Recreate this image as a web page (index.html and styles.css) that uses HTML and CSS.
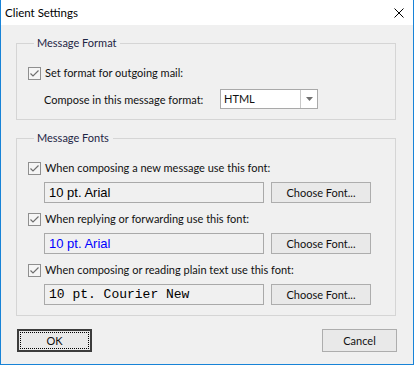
FILE: index.html
```html
<!DOCTYPE html>
<html lang="en">
<head>
  <meta charset="UTF-8">
  <title>Client Settings</title>
  <link rel="stylesheet" href="styles.css">
</head>
<body>
  <div class="window">
    <div class="titlebar">
      <span class="title">Client Settings</span>
      <svg class="close" width="10" height="10" viewBox="0 0 10 10">
        <path d="M0.5 0.5 L9.5 9.5 M9.5 0.5 L0.5 9.5" stroke="#000" stroke-width="1" fill="none"/>
      </svg>
    </div>
    <div class="client">
      <fieldset class="group group-format">
        <legend>Message Format</legend>
        <div class="check-row">
          <svg class="check" width="13" height="13" viewBox="0 0 13 13">
            <rect x="0.5" y="0.5" width="12" height="12" fill="#f5f5f5" stroke="#8f8f8f"/>
            <path d="M2.5 6.5 L5 9 L10.5 3.5" stroke="#6f6f6f" stroke-width="1.2" fill="none"/>
          </svg>
          <span>Set format for outgoing mail:</span>
        </div>
        <div class="format-row">
          <span class="format-label">Compose in this message format:</span>
          <div class="select">
            <span class="select-value">HTML</span>
            <span class="select-arrow">
              <svg width="7" height="4" viewBox="0 0 7 4"><path d="M0 0 H7 L3.5 4 Z" fill="#707070"/></svg>
            </span>
          </div>
        </div>
      </fieldset>

      <fieldset class="group group-fonts">
        <legend>Message Fonts</legend>
        <div class="check-row">
          <svg class="check" width="13" height="13" viewBox="0 0 13 13">
            <rect x="0.5" y="0.5" width="12" height="12" fill="#f5f5f5" stroke="#8f8f8f"/>
            <path d="M2.5 6.5 L5 9 L10.5 3.5" stroke="#6f6f6f" stroke-width="1.2" fill="none"/>
          </svg>
          <span>When composing a new message use this font:</span>
        </div>
        <div class="font-row">
          <div class="font-box font-arial">10 pt. Arial</div>
          <button class="btn">Choose Font...</button>
        </div>
        <div class="check-row">
          <svg class="check" width="13" height="13" viewBox="0 0 13 13">
            <rect x="0.5" y="0.5" width="12" height="12" fill="#f5f5f5" stroke="#8f8f8f"/>
            <path d="M2.5 6.5 L5 9 L10.5 3.5" stroke="#6f6f6f" stroke-width="1.2" fill="none"/>
          </svg>
          <span>When replying or forwarding use this font:</span>
        </div>
        <div class="font-row">
          <div class="font-box font-arial font-blue">10 pt. Arial</div>
          <button class="btn">Choose Font...</button>
        </div>
        <div class="check-row">
          <svg class="check" width="13" height="13" viewBox="0 0 13 13">
            <rect x="0.5" y="0.5" width="12" height="12" fill="#f5f5f5" stroke="#8f8f8f"/>
            <path d="M2.5 6.5 L5 9 L10.5 3.5" stroke="#6f6f6f" stroke-width="1.2" fill="none"/>
          </svg>
          <span>When composing or reading plain text use this font:</span>
        </div>
        <div class="font-row last">
          <div class="font-box font-courier">10 pt. Courier New</div>
          <button class="btn">Choose Font...</button>
        </div>
      </fieldset>

      <div class="actions">
        <button class="btn btn-default"><span class="focus">OK</span></button>
        <button class="btn btn-cancel">Cancel</button>
      </div>
    </div>
  </div>
</body>
</html>
```

FILE: styles.css
```css
body {
  margin: 0;
  font-family: Lato, 'Noto Sans', sans-serif;
  font-size: 11px;
  color: #000;
}

.window {
  width: 414px;
  height: 365px;
  box-sizing: border-box;
  border: 1px solid #1883d7;
  border-top: none;
  background-color: #f0f0f0;
  display: flex;
  flex-direction: column;
}

.titlebar {
  height: 25px;
  background-color: #fff;
  display: flex;
  align-items: center;
  justify-content: space-between;
  padding: 0 9px 0 4px;
  flex-shrink: 0;
}

.title {
  font-size: 11.5px;
  color: #000;
}

.client {
  padding: 10px 17px 0 15px;
}

.group {
  margin: 0;
  padding: 0 0 10px 11px;
  border: 1px solid #d5d5d5;
  min-width: 0;
}

.group legend {
  margin-left: 6px;
  padding: 0 4px 0 3px;
  line-height: 16px;
  color: #1e2545;
}

.group-format {
  padding-top: 14px;
}

.group-fonts {
  margin-top: 10px;
  padding-top: 14px;
}

.check-row {
  display: flex;
  align-items: center;
  height: 16px;
  line-height: 16px;
  color: #111;
}

.check {
  margin-right: 4px;
  flex-shrink: 0;
}

.format-row {
  display: flex;
  align-items: center;
  margin-top: 8px;
  margin-left: 16px;
  color: #111;
}

.format-label {
  width: 176px;
}

.select {
  width: 98px;
  height: 20px;
  box-sizing: border-box;
  border: 1px solid #a9a9a9;
  background-color: #fff;
  display: flex;
}

.select-value {
  flex: 1;
  padding-left: 3px;
  line-height: 18px;
}

.select-arrow {
  width: 16px;
  border-left: 1px solid #c8c8c8;
  display: flex;
  align-items: center;
  justify-content: center;
}

.font-row {
  display: flex;
  margin: 6px 0 8px 16px;
}

.font-row.last {
  margin-bottom: 0;
}

.font-box {
  width: 220px;
  height: 21px;
  box-sizing: border-box;
  border: 1px solid #a9a9a9;
  padding-left: 4px;
  line-height: 19px;
  margin-right: 7px;
}

.font-arial {
  font-family: 'Liberation Sans', Arial, sans-serif;
  font-size: 13px;
}

.font-blue {
  color: #0000ff;
}

.font-courier {
  font-family: 'Liberation Mono', 'Courier New', monospace;
  font-size: 13px;
}

.btn {
  width: 100px;
  height: 21px;
  box-sizing: border-box;
  border: 1px solid #adadad;
  background-color: #e9e9e9;
  font-family: Lato, 'Noto Sans', sans-serif;
  font-size: 11px;
  color: #111;
  padding: 0;
  cursor: pointer;
}

.actions {
  display: flex;
  justify-content: space-between;
  margin-top: 13px;
  padding-left: 1px;
  margin-right: -1px;
}

.btn-default,
.btn-cancel {
  width: 75px;
  height: 23px;
}

.btn-default {
  border: 2px solid #3c3c3c;
  padding: 1px;
}

.focus {
  display: flex;
  align-items: center;
  justify-content: center;
  height: 100%;
  box-sizing: border-box;
  border: 1px dotted #000;
}
```
